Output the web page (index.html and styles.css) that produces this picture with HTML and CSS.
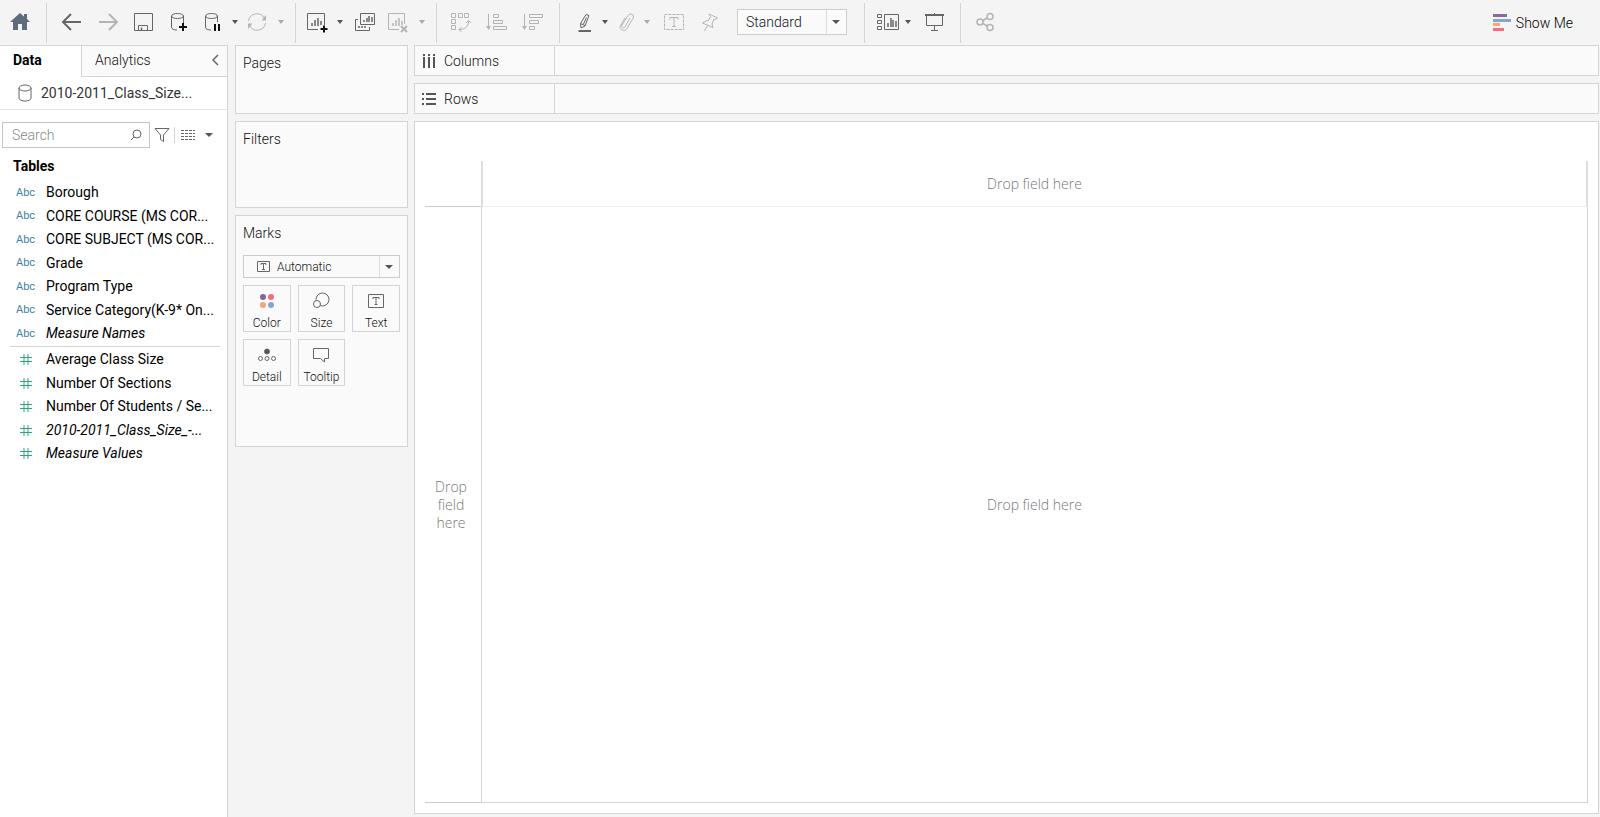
FILE: index.html
```html
<!DOCTYPE html>
<html lang="en">
<head>
    <meta charset="UTF-8">
    <meta name="viewport" content="width=device-width, initial-scale=1.0">
    <title>Class Size - Worksheet</title>
    <link rel="stylesheet" href="styles.css">
</head>
<body>
<header class="toolbar">
    <div class="group group-home">
        <button class="tool" aria-label="Home"><svg viewBox="0 0 24 24"><path d="M12 3 L2 12 H5 V20 H10 V14 H14 V20 H19 V12 H22 L19 9 V4 H16 V6.5 Z" fill="#5d6b7c"/></svg></button>
    </div>
    <div class="group group-file">
        <button class="tool" aria-label="Undo"><svg viewBox="0 0 24 24" class="thick"><path d="M21 12 H3 M11 4 L3 12 L11 20"/></svg></button>
        <button class="tool off" aria-label="Redo"><svg viewBox="0 0 24 24" class="thick"><path d="M3 12 H21 M13 4 L21 12 L13 20"/></svg></button>
        <button class="tool" aria-label="Save"><svg viewBox="0 0 24 24"><path d="M2.5 3.5 H20.5 V20.5 H2.5 Z M6.5 20 V15.5 H15.5 V20"/><path class="bars" d="M9.5 20 V17.5"/></svg></button>
        <button class="tool" aria-label="New data source"><svg viewBox="0 0 24 24"><path d="M3.5 6 V17 C3.5 19 6 20 9 20 M15.5 6 V14"/><ellipse cx="9.5" cy="6" rx="6" ry="2.5"/><path class="solid" d="M15 13 V21 M11 17 H19"/></svg></button>
        <div class="split">
            <button class="tool" aria-label="Pause auto updates"><svg viewBox="0 0 24 24"><path d="M6.5 6 V17 C6.5 19 9 20 12 20 M18.5 6 V12"/><ellipse cx="12.5" cy="6" rx="6" ry="2.5"/><path class="solid" d="M16 14 V21 M20 14 V21"/></svg></button>
            <button class="caret" aria-label="Update options"></button>
        </div>
        <div class="split off">
            <button class="tool" aria-label="Run update"><svg viewBox="0 0 24 24"><path d="M3.5 11 A8.5 8.5 0 0 1 19.5 8.5 M20.5 13 A8.5 8.5 0 0 1 4.5 15.5"/><path class="fill" d="M21 5 V10.5 H16.5 Z M3 19 V13.5 H7.5 Z"/></svg></button>
            <button class="caret" aria-label="Run options"></button>
        </div>
    </div>
    <div class="group group-sheet">
        <div class="split">
            <button class="tool" aria-label="New worksheet"><svg viewBox="0 0 24 24"><path d="M14 19.5 H3.5 V3.5 H20.5 V15"/><path class="bars" d="M8 16 V13 M11 16 V10 M14 16 V8 M17 15 V11"/><path class="solid" d="M20 15.5 V22.5 M16.5 19 H23.5"/></svg></button>
            <button class="caret" aria-label="New sheet options"></button>
        </div>
        <button class="tool" aria-label="Duplicate"><svg viewBox="0 0 24 24"><path d="M5.5 3.5 H19.5 V14.5 H5.5 Z"/><path d="M3 9.5 H0.5 V20.5 H14.5 V17"/><path class="bars" d="M9 12 V10 M12 12 V8 M14 12 V6 M17 12 V7 M4 18 V16 M7 18 V16 M10 18 V16"/></svg></button>
        <div class="split off">
            <button class="tool" aria-label="Clear sheet"><svg viewBox="0 0 24 24"><path d="M13 19.5 H2.5 V3.5 H18.5 V14"/><path class="bars" d="M7 16 V13 M10 16 V10 M13 16 V8 M16 15 V11"/><path class="thick" d="M15 16 L21 22 M21 16 L15 22"/></svg></button>
            <button class="caret" aria-label="Clear options"></button>
        </div>
    </div>
    <div class="group group-sort off">
        <button class="tool" aria-label="Swap rows and columns"><svg viewBox="0 0 24 24"><path d="M2.5 3.5 h4 v4 h-4z M9.5 3.5 h4 v4 h-4z M15.5 3.5 h4 v4 h-4z M2.5 9.5 h4 v4 h-4z M2.5 15.5 h4 v4 h-4z M10 19.5 C16 19.5 19.5 17 19.5 11 M17 13 L19.5 10.5 L22 13 M12.5 17 L10 19.5 L12.5 22"/></svg></button>
        <button class="tool" aria-label="Sort ascending"><svg viewBox="0 0 24 24"><path d="M3.5 4 V18 M8.5 4.5 h5 v3 h-5z M8.5 10.5 h9 v3 h-9z M8.5 16.5 h13 v3 h-13z"/><path class="fill" d="M1 16 H6 L3.5 20 Z"/></svg></button>
        <button class="tool" aria-label="Sort descending"><svg viewBox="0 0 24 24"><path d="M3.5 4 V18 M8.5 4.5 h13 v3 h-13z M8.5 10.5 h9 v3 h-9z M8.5 16.5 h5 v3 h-5z"/><path class="fill" d="M1 16 H6 L3.5 20 Z"/></svg></button>
    </div>
    <div class="group group-format">
        <div class="split tight">
            <button class="tool" aria-label="Highlight"><svg viewBox="0 0 24 24"><path d="M13 4.5 L16 5.5 L12 16 L8 18 L7.5 13.5 Z M7.5 13.5 L12 15.5 M13.5 7.5 L10.5 14"/><path class="thick" d="M5.5 21 H18"/></svg></button>
            <button class="caret" aria-label="Highlight options"></button>
        </div>
        <div class="split tight off">
            <button class="tool" aria-label="Group members"><svg viewBox="0 0 24 24"><path d="M15 8 L10 17 C8.5 19 5.5 17.5 7 15 L13 5.5 C15 2.5 20 4.5 18 8.5 L12 18.5 C9 22.5 3.5 19.5 5.5 15.5 L10 8"/></svg></button>
            <button class="caret" aria-label="Group options"></button>
        </div>
        <button class="tool off" aria-label="Show mark labels"><svg viewBox="0 0 24 24"><path d="M2.5 4.5 H21.5 V19.5 H2.5 Z" stroke-dasharray="3 1"/><path d="M8 9.5 V7.5 H16 V9.5 M12 7.5 V16.5 M10 16.5 H14"/></svg></button>
        <button class="tool off" aria-label="Fix axes"><svg viewBox="0 0 24 24"><path d="M11 4 L19.5 8 L18 9.5 L16 9 L14 14 L15 17.5 L4.5 13 L8 11 L10.5 10.5 L12.5 6.5 Z M9.5 15.5 L6.5 21"/></svg></button>
        <div class="picker fit">
            <select aria-label="Fit"><option>Standard</option></select>
        </div>
    </div>
    <div class="group group-show">
        <div class="split tight">
            <button class="tool" aria-label="Show or hide cards"><svg viewBox="0 0 24 24"><path d="M1.5 4.5 h4 v3 h-4z M1.5 10.5 h4 v3 h-4z M1.5 16.5 h4 v3 h-4z M8.5 4.5 H22.5 V19.5 H8.5 Z"/><path class="bars" d="M12 17 V13 M15 17 V8 M17 17 V10 M20 17 V11"/></svg></button>
            <button class="caret" aria-label="Card options"></button>
        </div>
        <button class="tool" aria-label="Presentation mode"><svg viewBox="0 0 24 24"><path class="thick" d="M2 5 H21"/><path d="M3.5 5 V15.5 H19.5 V5 M11.5 3 V5 M11.5 15.5 V20 M8 20.5 H15"/></svg></button>
    </div>
    <div class="group group-share off">
        <button class="tool" aria-label="Share"><svg viewBox="0 0 24 24" class="medium"><circle cx="6" cy="12" r="3"/><circle cx="16" cy="6.5" r="3"/><circle cx="16" cy="17.5" r="3"/><path d="M9 10.5 L13 8 M9 13.5 L13 16"/></svg></button>
    </div>
    <button class="show-me">
        <svg viewBox="0 0 18 18"><path fill="#8a6b96" d="M0 0h14v3H0z"/><path fill="#81a7d0" d="M0 5h18v3H0z"/><path fill="#f4a67b" d="M0 9h7v3H0z"/><path fill="#fb6b7b" d="M0 14h11v3H0z"/></svg>
        Show Me
    </button>
</header>

<main class="workspace">
    <aside class="sidebar">
        <div class="tabs">
            <button class="tab active">Data</button>
            <button class="tab">Analytics</button>
            <button class="collapse" aria-label="Collapse pane"><svg viewBox="0 0 8 12"><path d="M7 1 L2 6 L7 11"/></svg></button>
        </div>
        <a class="datasource" href="#">
            <svg viewBox="0 0 14 18"><ellipse cx="7" cy="4" rx="6" ry="3"/><path d="M1 4 V14 C1 18 13 18 13 14 V4"/></svg>
            2010-2011_Class_Size...
        </a>
        <div class="search-row">
            <div class="search">
                <input type="text" placeholder="Search" aria-label="Search">
                <svg viewBox="0 0 12 12"><circle cx="7" cy="5" r="4"/><path d="M4 8 L1 11"/></svg>
            </div>
            <button class="filter" aria-label="Filter fields"><svg viewBox="0 0 16 16"><path d="M1 1.5 H15 L9.5 8 V14.5 L6.5 12.5 V8 Z"/></svg></button>
            <button class="grid-view" aria-label="View data"><svg viewBox="0 0 14 12"><path d="M0 1.5 H14 M0 4.5 H14 M0 7.5 H14 M0 10.5 H14" stroke-dasharray="3 1"/></svg></button>
            <button class="caret" aria-label="Data pane options"></button>
        </div>
        <h2>Tables</h2>
        <ul class="fields dimensions">
            <li><span class="abc">Abc</span>Borough</li>
            <li><span class="abc">Abc</span>CORE COURSE (MS COR...</li>
            <li><span class="abc">Abc</span>CORE SUBJECT (MS COR...</li>
            <li><span class="abc">Abc</span>Grade</li>
            <li><span class="abc">Abc</span>Program Type</li>
            <li><span class="abc">Abc</span>Service Category(K-9* On...</li>
            <li class="generated"><span class="abc">Abc</span>Measure Names</li>
        </ul>
        <ul class="fields measures">
            <li><svg viewBox="0 0 12 12"><path d="M4 1 V12 M8 1 V12 M0 4.5 H12 M0 8.5 H12"/></svg>Average Class Size</li>
            <li><svg viewBox="0 0 12 12"><path d="M4 1 V12 M8 1 V12 M0 4.5 H12 M0 8.5 H12"/></svg>Number Of Sections</li>
            <li><svg viewBox="0 0 12 12"><path d="M4 1 V12 M8 1 V12 M0 4.5 H12 M0 8.5 H12"/></svg>Number Of Students / Se...</li>
            <li class="generated"><svg viewBox="0 0 12 12"><path d="M4 1 V12 M8 1 V12 M0 4.5 H12 M0 8.5 H12"/></svg>2010-2011_Class_Size_-...</li>
            <li class="generated"><svg viewBox="0 0 12 12"><path d="M4 1 V12 M8 1 V12 M0 4.5 H12 M0 8.5 H12"/></svg>Measure Values</li>
        </ul>
    </aside>

    <section class="cards">
        <div class="card pages"><h3>Pages</h3></div>
        <div class="card filters"><h3>Filters</h3></div>
        <div class="card marks">
            <h3>Marks</h3>
            <div class="picker mark-type">
                <svg viewBox="0 0 13 11"><path d="M0.5 0.5 H12.5 V10.5 H0.5 Z M4 4 V2.5 H9 V4 M6.5 2.5 V8.5 M5 8.5 H8"/></svg>
                <select aria-label="Mark type"><option>Automatic</option></select>
            </div>
            <div class="mark-buttons">
                <button><svg viewBox="0 0 18 18"><circle fill="#84668f" cx="5" cy="5" r="3"/><circle fill="#fb6b7b" cx="13" cy="5" r="3"/><circle fill="#f4a67b" cx="5" cy="13" r="3"/><circle fill="#81a7d0" cx="13" cy="13" r="3"/></svg>Color</button>
                <button><svg viewBox="0 0 18 18"><circle cx="10.5" cy="7.5" r="6.5"/><circle cx="5" cy="12" r="3.5" class="front"/></svg>Size</button>
                <button><svg viewBox="0 0 18 18"><path d="M1.5 2.5 H16.5 V15.5 H1.5 Z M6 7 V5.5 H12 V7 M9 5.5 V12.5 M7.5 12.5 H10.5"/></svg>Text</button>
                <button><svg viewBox="0 0 18 18"><circle cx="9" cy="5.5" r="2.5" class="dot"/><circle cx="2.5" cy="12.5" r="2"/><circle cx="9" cy="12.5" r="2"/><circle cx="15.5" cy="12.5" r="2"/></svg>Detail</button>
                <button><svg viewBox="0 0 18 18"><path d="M1.5 2.5 H16.5 V12.5 H12.5 V16 L8.5 12.5 H1.5 Z"/></svg>Tooltip</button>
            </div>
        </div>
    </section>

    <section class="sheet">
        <div class="shelf">
            <div class="shelf-name"><svg viewBox="0 0 14 14"><path d="M2 0 V2 M7 0 V2 M12 0 V2 M2 3 V14 M7 3 V14 M12 3 V14"/></svg>Columns</div>
        </div>
        <div class="shelf">
            <div class="shelf-name"><svg viewBox="0 0 14 14"><path d="M0 2 H2 M0 7 H2 M0 12 H2 M4 2 H14 M4 7 H14 M4 12 H14"/></svg>Rows</div>
        </div>
        <div class="view">
            <div class="drop corner"></div>
            <div class="drop top">Drop field here</div>
            <div class="drop left">Drop<br>field<br>here</div>
            <div class="drop body">Drop field here</div>
        </div>
    </section>
</main>
</body>
</html>
```
FILE: styles.css
```css
* {
    box-sizing: border-box;
}
body {
    font-family: Roboto, 'Liberation Sans', sans-serif;
    font-size: 14px;
    font-weight: 300;
    margin: 0;
    min-height: 100vh;
    display: flex;
    flex-direction: column;
    background-color: #f4f4f4;
    color: #111;
}
button, input, select {
    font: inherit;
    color: inherit;
    background: none;
    border: 0;
    border-radius: 0;
    margin: 0;
    padding: 0;
}
h2, h3, ul {
    margin: 0;
    padding: 0;
}
svg {
    display: block;
    flex: none;
    fill: none;
    stroke: #666;
    stroke-width: 1;
}

/* Toolbar */
.toolbar {
    display: flex;
    height: 45px;
    padding: 3px 0 2px;
}
.group {
    display: flex;
    align-items: center;
    border-left: 1px solid #d4d4d4;
    padding-bottom: 2px;
}
.group-home {
    border-left: 0;
    width: 46px;
    padding-left: 2px;
}
.group-home svg {
    stroke: none;
}
.group-file {
    padding-right: 5px;
    padding-left: 7px;
}
.group-sheet {
    padding-right: 5px;
    padding-left: 7px;
}
.group-sort {
    padding-right: 8px;
    padding-left: 6px;
}
.group-format {
    padding-right: 17px;
    padding-left: 12px;
}
.group-show {
    padding-right: 7px;
    padding-left: 10px;
}
.group-share {
    padding-left: 7px;
}
.tool {
    width: 36px;
    height: 28px;
    display: flex;
    align-items: center;
    justify-content: center;
}
.tool svg {
    width: 24px;
    height: 24px;
}
.split {
    display: flex;
    align-items: center;
}
.split .tool {
    width: 26px;
}
.caret {
    width: 20px;
    height: 28px;
    display: flex;
    align-items: center;
    justify-content: center;
}
.caret::before, .picker::after {
    content: "";
    border: 3px solid transparent;
    border-top: 4px solid #555;
    border-bottom: 0;
}
.split .caret {
    padding-left: 2px;
}
.split.tight .caret {
    width: 16px;
    padding: 0 2px 0 0;
}
.off svg {
    stroke: #b4b4b4;
}
.off .caret::before {
    border-top-color: #aaa;
}
.off .fill {
    fill: #b4b4b4;
    stroke: none;
}
.thick {
    stroke-width: 2;
}
.medium {
    stroke-width: 1.5;
}
.bars {
    stroke-width: 1.5;
}
.solid {
    stroke: #111;
    stroke-width: 2;
}
.show-me {
    margin-left: auto;
    padding: 0 27px 1px 0;
    display: flex;
    align-items: center;
    gap: 5px;
    color: #000;
}
.show-me svg {
    width: 18px;
    height: 18px;
    stroke: none;
}

/* Drop-downs */
.picker {
    display: flex;
    align-items: center;
    position: relative;
    border: 1px solid #ccc;
    background-color: #fafafa;
}
.picker select {
    appearance: none;
    flex: 1;
    height: 100%;
    min-width: 0;
}
.picker::after {
    position: absolute;
    right: 6px;
    border-width: 4px 4px 0;
    pointer-events: none;
}
.picker::before {
    content: "";
    position: absolute;
    right: 19px;
    top: 0;
    bottom: 0;
    border-left: 1px solid #ddd;
}
.fit {
    width: 110px;
    height: 26px;
    margin-left: 9px;
}
.fit select {
    padding-left: 8px;
}

/* Data pane */
.workspace {
    flex: 1;
    display: flex;
    align-items: stretch;
}
.sidebar {
    width: 228px;
    background-color: #fff;
    border-top: 1px solid #d4d4d4;
    border-right: 1px solid #d4d4d4;
    color: #000;
}
.tabs {
    display: flex;
    height: 31px;
}
.tab {
    flex: 1;
    text-align: left;
    padding: 0 0 2px 13px;
    border-bottom: 1px solid #d4d4d4;
    background-color: #fafafa;
    color: #111;
}
.tab.active {
    flex: none;
    width: 82px;
    border-right: 1px solid #d4d4d4;
    border-bottom: 0;
    background-color: #fff;
    color: #000;
    font-weight: bold;
    padding: 0 0 4px 13px;
}
.collapse {
    width: 24px;
    border-bottom: 1px solid #d4d4d4;
    background-color: #fafafa;
    padding: 0 0 2px 8px;
}
.collapse svg {
    width: 8px;
    height: 12px;
    stroke-width: 1.5;
}
.datasource {
    display: flex;
    align-items: center;
    gap: 9px;
    height: 33px;
    padding-left: 18px;
    border-bottom: 1px solid #e4e4e4;
    color: #333;
    font-weight: 400;
    text-decoration: none;
}
.datasource svg {
    width: 14px;
    height: 18px;
}
.search-row {
    display: flex;
    align-items: center;
    padding: 11px 0 0 2px;
}
.search {
    display: flex;
    align-items: center;
    width: 148px;
    height: 26px;
    padding: 0 7px 0 9px;
    border: 1px solid #c4c4c4;
}
.search input {
    flex: 1;
    min-width: 0;
    outline: 0;
}
.search input::placeholder {
    color: #888;
    opacity: 1;
}
.search svg {
    width: 12px;
    height: 12px;
}
.filter {
    width: 25px;
    padding-left: 4px;
    border-right: 1px solid #d4d4d4;
}
.filter svg {
    width: 16px;
    height: 16px;
}
.grid-view {
    padding: 0 4px 0 6px;
}
.grid-view svg {
    width: 14px;
    height: 12px;
}
.search-row .caret::before {
    border-width: 4px 4px 0;
}
h2 {
    font-size: 14px;
    line-height: 20px;
    padding: 7px 0 4px 13px;
}
.fields {
    list-style: none;
    white-space: nowrap;
    font-weight: 400;
}
.fields li {
    display: flex;
    align-items: center;
    height: 24px;
    padding-left: 16px;
}
.fields li:nth-child(even) {
    height: 23px;
}
.abc {
    width: 30px;
    font-size: 11px;
    color: #3b83a5;
    font-style: normal;
}
.generated {
    font-style: italic;
}
.measures {
    margin: 1px 7px 0 10px;
    border-top: 1px solid #d4d4d4;
}
.measures li {
    padding-left: 10px;
}
.measures svg {
    width: 12px;
    height: 12px;
    margin-right: 14px;
    stroke: #2fa37c;
}

/* Shelf cards */
.cards {
    width: 173px;
    margin-left: 7px;
    display: flex;
    flex-direction: column;
    gap: 7px;
}
.card {
    border: 1px solid #d4d4d4;
    background-color: #fafafa;
    padding: 7px;
}
h3 {
    font-size: 14px;
    font-weight: 300;
    line-height: 20px;
}
.pages {
    min-height: 69px;
}
.filters {
    min-height: 87px;
}
.marks {
    min-height: 232px;
}
.mark-type {
    height: 23px;
    margin-top: 12px;
    padding-left: 13px;
    gap: 7px;
    font-size: 12px;
}
.mark-type svg {
    width: 13px;
    height: 11px;
}
.mark-buttons {
    display: grid;
    grid-template-columns: repeat(3, 1fr);
    gap: 7px;
    margin-top: 7px;
}
.mark-buttons button {
    display: flex;
    flex-direction: column;
    align-items: center;
    height: 47px;
    padding-top: 6px;
    gap: 6px;
    border: 1px solid #d4d4d4;
    font-size: 12px;
}
.mark-buttons svg {
    width: 18px;
    height: 18px;
}
.mark-buttons [fill] {
    stroke: none;
}
.mark-buttons .front {
    fill: #fafafa;
}
.mark-buttons .dot {
    fill: #555;
}

/* Sheet */
.sheet {
    flex: 1;
    margin: 0 1px 3px 6px;
    display: flex;
    flex-direction: column;
    gap: 7px;
}
.shelf {
    display: flex;
    height: 31px;
    border: 1px solid #d4d4d4;
    background-color: #fafafa;
}
.shelf-name {
    display: flex;
    align-items: center;
    gap: 8px;
    width: 140px;
    padding-left: 7px;
    border-right: 1px solid #d4d4d4;
}
.shelf-name svg {
    width: 14px;
    height: 14px;
    stroke: #555;
    stroke-width: 2;
}
.view {
    flex: 1;
    display: grid;
    grid-template-columns: 56px 1fr;
    grid-template-rows: 46px 1fr;
    padding: 39px 10px 10px;
    border: 1px solid #d4d4d4;
    background-color: #fff;
}
.drop {
    display: flex;
    align-items: center;
    justify-content: center;
    text-align: center;
    font-family: 'Open Sans', 'Liberation Sans', sans-serif;
    line-height: 18px;
    color: #777;
}
.corner {
    border-bottom: 1px solid #ccc;
}
.top {
    border-left: 2px solid #ddd;
    border-right: 2px solid #ddd;
    border-bottom: 1px solid #eee;
}
.left {
    border-bottom: 1px solid #ccc;
    padding-right: 4px;
}
.body {
    border: 1px solid #d4d4d4;
    border-top: 0;
}
```
